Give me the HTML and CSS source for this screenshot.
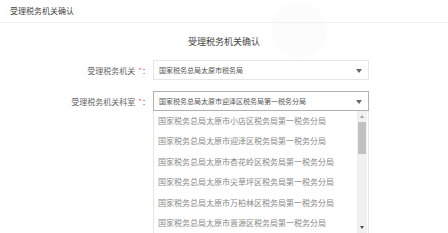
FILE: index.html
```
<!DOCTYPE html>
<html lang="zh-CN">
<head>
  <meta charset="UTF-8">
  <title>受理税务机关确认</title>
  <link rel="stylesheet" href="styles.css">
</head>
<body>
  <div class="page-head">受理税务机关确认</div>
  <div class="halo"></div>

  <div class="form">
    <h2 class="form-title">受理税务机关确认</h2>

    <div class="row">
      <label class="label">受理税务机关<i>*</i>：</label>
      <div class="select">
        <span>国家税务总局太原市税务局</span>
        <b class="caret"></b>
      </div>
    </div>

    <div class="row">
      <label class="label">受理税务机关科室<i>*</i>：</label>
      <div class="select open">
        <span>国家税务总局太原市迎泽区税务局第一税务分局</span>
        <b class="caret"></b>

        <!--dropdown-->
        <div class="dropdown">
          <ul class="options">
            <li>国家税务总局太原市小店区税务局第一税务分局</li>
            <li>国家税务总局太原市迎泽区税务局第一税务分局</li>
            <li>国家税务总局太原市杏花岭区税务局第一税务分局</li>
            <li>国家税务总局太原市尖草坪区税务局第一税务分局</li>
            <li>国家税务总局太原市万柏林区税务局第一税务分局</li>
            <li>国家税务总局太原市晋源区税务局第一税务分局</li>
          </ul>
          <div class="scrollbar">
            <span class="sb-up"></span>
            <span class="sb-thumb"></span>
            <span class="sb-down"></span>
          </div>
        </div>
      </div>
    </div>
  </div>
</body>
</html>
```

FILE: styles.css
```
body {
  margin: 0;
  background: #ffffff;
  font-family: "Noto Sans CJK SC", "Noto Sans", sans-serif;
  color: #555555;
  height: 233px;
  overflow: hidden;
}
.page-head {
  height: 22px;
  line-height: 22px;
  padding-left: 10px;
  font-size: 8px;
  color: #444444;
  border-bottom: 1px solid #f0f0f0;
}
.halo {
  position: absolute;
  left: 271px;
  top: 2px;
  width: 56px;
  height: 56px;
  border-radius: 50%;
  background: #fcfcfc;
  z-index: -1;
}
.form {
  padding-top: 11px;
}
.form-title {
  margin: 0 0 10px;
  text-align: center;
  font-size: 9px;
  font-weight: normal;
  color: #444444;
  line-height: 16px;
}
.row {
  display: flex;
  align-items: center;
  margin-bottom: 11px;
}
.label {
  width: 153px;
  text-align: right;
  font-size: 8px;
  color: #666666;
  padding-right: 3px;
  box-sizing: border-box;
}
.label i {
  font-style: normal;
  color: #f06a6a;
  margin-left: 3px;
}
.select {
  position: relative;
  width: 216px;
  height: 20px;
  border: 1px solid #e6e6e6;
  box-sizing: border-box;
  display: flex;
  align-items: center;
  padding-left: 5px;
  font-size: 7px;
  color: #555555;
}
.select.open {
  border-color: #b0b0b0;
}
.caret {
  position: absolute;
  right: 6px;
  top: 8px;
  border-left: 3px solid transparent;
  border-right: 3px solid transparent;
  border-top: 4px solid #666666;
}
.dropdown {
  position: absolute;
  left: -1px;
  top: 19px;
  width: 216px;
  height: 123px;
  background: #ffffff;
  border: 1px solid #e6e6e6;
  border-top: none;
  box-sizing: border-box;
  display: flex;
}
.options {
  flex: 1;
  list-style: none;
  margin: 0;
  padding: 0 0 0 4px;
}
.options li {
  height: 20.4px;
  line-height: 20.4px;
  font-size: 8px;
  color: #888888;
  white-space: nowrap;
}
.scrollbar {
  width: 10px;
  background: #f1f1f1;
  position: relative;
  margin-right: 1px;
}
.sb-up, .sb-down {
  position: absolute;
  left: 3px;
  border-left: 2px solid transparent;
  border-right: 2px solid transparent;
}
.sb-up {
  top: 4px;
  border-bottom: 3px solid #a3a3a3;
}
.sb-down {
  bottom: 4px;
  border-top: 3px solid #505050;
}
.sb-thumb {
  position: absolute;
  left: 1px;
  right: 1px;
  top: 11px;
  height: 32px;
  background: #c1c1c1;
}
```
